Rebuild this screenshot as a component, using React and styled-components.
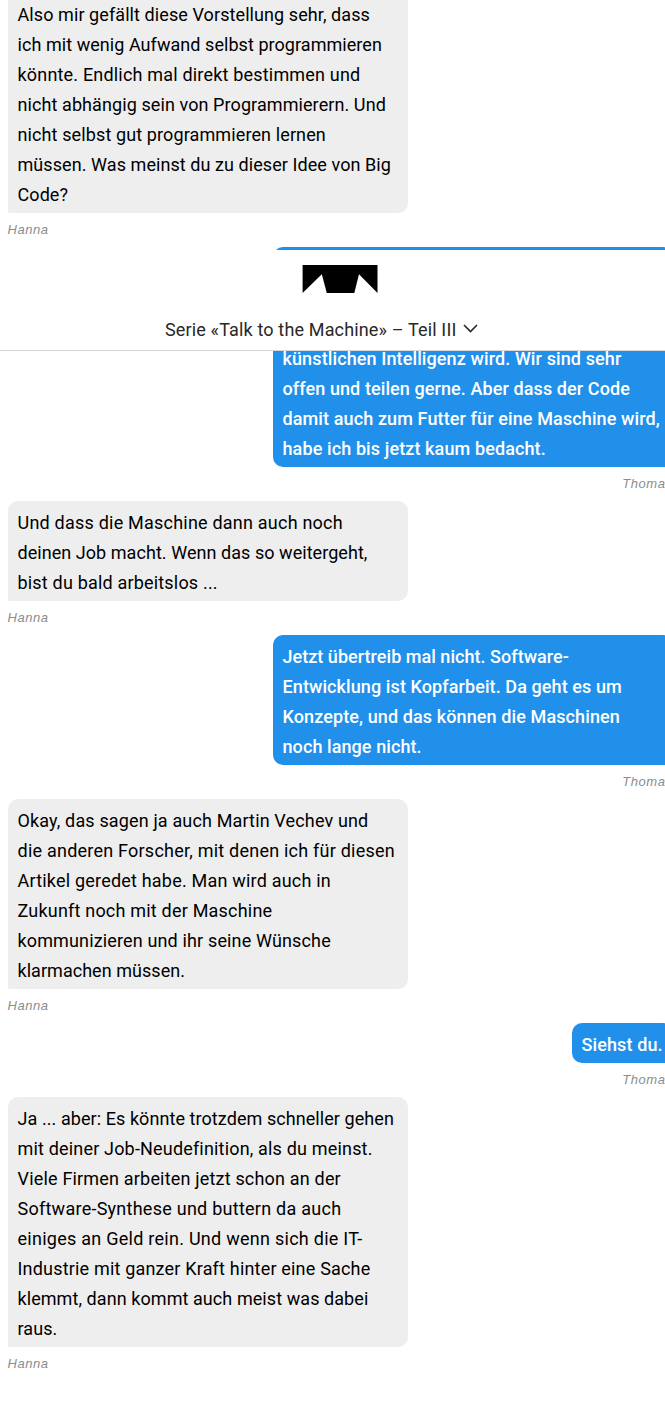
import React from "react";
import styled, { createGlobalStyle } from "styled-components";

const GlobalStyle = createGlobalStyle`
  html, body, #root {
    height: 100%;
  }
  body {
    margin: 0;
    background: #fff;
    overflow: hidden;
    font-family: Roboto, "Liberation Sans", sans-serif;
    -webkit-font-smoothing: antialiased;
  }
`;

const Page = styled.main`
  position: relative;
  height: 1408px;
  overflow: hidden;
`;

const Header = styled.header`
  position: absolute;
  top: 250px;
  left: 0;
  right: 0;
  box-sizing: border-box;
  height: 101px;
  padding: 15px 0 0;
  display: flex;
  flex-direction: column;
  background: #fff;
  border-bottom: 1px solid #d7d7d7;
`;

const Logo = styled.svg`
  display: block;
  width: 76px;
  height: 28px;
  margin-left: 302px;
`;

const SeriesToggle = styled.button`
  display: flex;
  align-items: center;
  gap: 7px;
  margin: 22px 0 0 165px;
  padding: 0;
  border: 0;
  background: none;
  color: #282828;
  font: 400 18px/30px Roboto, sans-serif;
  letter-spacing: 0.15px;
  white-space: nowrap;
`;

const Chevron = styled.svg`
  display: block;
  width: 15px;
  height: 9px;
  margin-bottom: 3px;
`;

const Chat = styled.div`
  box-sizing: border-box;
  width: 672.5px;
  margin-top: -7px;
  padding-left: 7.5px;
  display: flex;
  flex-direction: column;
`;

const Message = styled.article`
  display: flex;
  flex-direction: column;
  align-items: ${(p) => (p.$own ? "flex-end" : "flex-start")};
`;

const Bubble = styled.div`
  box-sizing: border-box;
  width: ${(p) => (p.$compact ? "101px" : "400px")};
  min-height: ${(p) => (p.$tall ? "220px" : "0")};
  display: flex;
  flex-direction: column;
  justify-content: flex-end;
  padding: 7px 10px 3px;
  border-radius: ${(p) => (p.$own ? "10px 10px 2px 10px" : "10px 10px 10px 2px")};
  background: ${(p) => (p.$own ? "#2190eb" : "#eee")};
  color: ${(p) => (p.$own ? "#fff" : "#000")};
  font-size: 18px;
  font-weight: ${(p) => (p.$own ? 500 : 400)};
  line-height: 30px;
`;

const Line = styled.span`
  display: block;
  white-space: nowrap;
  letter-spacing: ${(p) => p.$tracking + 0.01}px;
`;

const Author = styled.cite`
  height: 34px;
  color: #8c8c8c;
  font-family: "Liberation Sans", Arial, sans-serif;
  font-size: 13px;
  font-style: italic;
  font-weight: 400;
  line-height: 33px;
  letter-spacing: 0.55px;
`;

const messages = [
  {
    author: "Hanna",
    lines: [
      ["Also mir gefällt diese Vorstellung sehr, dass", 0.074],
      ["ich mit wenig Aufwand selbst programmieren", 0.044],
      ["könnte. Endlich mal direkt bestimmen und", 0.177],
      ["nicht abhängig sein von Programmierern. Und", 0.077],
      ["nicht selbst gut programmieren lernen", 0.105],
      ["müssen. Was meinst du zu dieser Idee von Big", 0.059],
      ["Code?", 0.063],
    ],
  },
  {
    author: "Thomas",
    own: true,
    tall: true,
    lines: [
      ["künstlichen Intelligenz wird. Wir sind sehr", 0.102],
      ["offen und teilen gerne. Aber dass der Code", 0.083],
      ["damit auch zum Futter für eine Maschine wird,", 0.105],
      ["habe ich bis jetzt kaum bedacht.", 0.101],
    ],
  },
  {
    author: "Hanna",
    lines: [
      ["Und dass die Maschine dann auch noch", 0.207],
      ["deinen Job macht. Wenn das so weitergeht,", 0.04],
      ["bist du bald arbeitslos ...", 0.174],
    ],
  },
  {
    author: "Thomas",
    own: true,
    lines: [
      ["Jetzt übertreib mal nicht. Software-", 0.024],
      ["Entwicklung ist Kopfarbeit. Da geht es um", 0.084],
      ["Konzepte, und das können die Maschinen", 0.095],
      ["noch lange nicht.", 0.074],
    ],
  },
  {
    author: "Hanna",
    lines: [
      ["Okay, das sagen ja auch Martin Vechev und", 0.135],
      ["die anderen Forscher, mit denen ich für diesen", 0.216],
      ["Artikel geredet habe. Man wird auch in", 0.189],
      ["Zukunft noch mit der Maschine", 0.192],
      ["kommunizieren und ihr seine Wünsche", 0.135],
      ["klarmachen müssen.", 0.03],
    ],
  },
  {
    author: "Thomas",
    own: true,
    compact: true,
    lines: [["Siehst du.", 0.1]],
  },
  {
    author: "Hanna",
    lines: [
      ["Ja ... aber: Es könnte trotzdem schneller gehen", 0.061],
      ["mit deiner Job-Neudefinition, als du meinst.", 0.165],
      ["Viele Firmen arbeiten jetzt schon an der", 0.175],
      ["Software-Synthese und buttern da auch", 0.244],
      ["einiges an Geld rein. Und wenn sich die IT-", 0.253],
      ["Industrie mit ganzer Kraft hinter eine Sache", 0.176],
      ["klemmt, dann kommt auch meist was dabei", 0.063],
      ["raus.", 0.05],
    ],
  },
];

export default function App() {
  return (
    <Page>
      <GlobalStyle />
      <Chat>
        {messages.map((m, i) => (
          <Message key={i} $own={m.own}>
            <Bubble $own={m.own} $tall={m.tall} $compact={m.compact}>
              {m.lines.map(([text, tracking]) => (
                <Line key={text} $tracking={tracking}>
                  {text}
                </Line>
              ))}
            </Bubble>
            <Author>{m.author}</Author>
          </Message>
        ))}
      </Chat>
      <Header>
        <Logo viewBox="0 0 76 28" aria-hidden="true">
          <path d="M0.6 0H75.5V28L57 9.3L52.3 28H24.8L19.8 9.3L0.6 28Z" fill="#000" />
        </Logo>
        <SeriesToggle>
          Serie «Talk to the Machine» – Teil III
          <Chevron viewBox="0 0 15 9" aria-hidden="true">
            <path d="M1 1L7.5 7.5L14 1" fill="none" stroke="#282828" strokeWidth="1.6" />
          </Chevron>
        </SeriesToggle>
      </Header>
    </Page>
  );
}
